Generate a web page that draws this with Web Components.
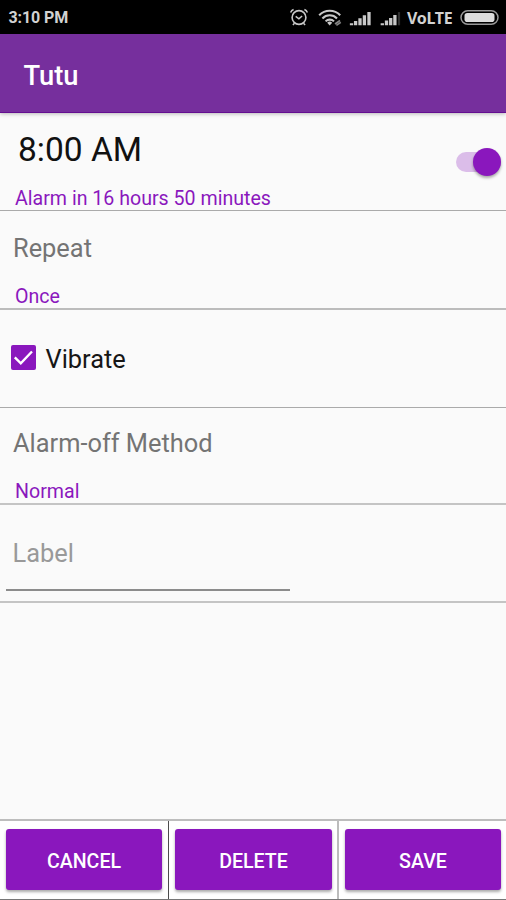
<!DOCTYPE html>
<html lang="en">
<head>
<meta charset="utf-8">
<title>Tutu</title>
<style>
body{margin:0;background:#fafafa;font-family:Roboto,"Liberation Sans",sans-serif;color:#111}
</style>
</head>
<body>
<alarm-screen></alarm-screen>
<script>
const define=(name,html)=>customElements.define(name,class extends HTMLElement{
  constructor(){
    super();
    const t=document.createElement('template');
    t.innerHTML=html;
    this.attachShadow({mode:'open'}).append(t.content.cloneNode(true));
  }
});

define('status-bar',`<style>
:host{display:flex;box-sizing:border-box;height:34px;background:#000;color:#d2d2d2;align-items:center;padding:2px 6px 0 8.5px;font-weight:700}
.time{font-size:16px;letter-spacing:-.1px;flex:1;line-height:20px}
.net{font:700 16px/20px "Noto Sans","Open Sans",sans-serif;letter-spacing:-.3px;margin:0 7px 0 6px;width:46px;white-space:nowrap}
svg{display:block;flex:none}
</style>
<span class="time">3:10 PM</span>
<svg width="114" height="24" viewBox="0 0 114 24" fill="none" stroke="#c8c8c8">
<circle cx="12" cy="11.5" r="6.9" stroke-width="1.6"/>
<path d="M8.7 10.3l3.2 2.5 3.2-2.8M3.6 6.5a5 5 0 0 1 3-3M17.4 3.5a5 5 0 0 1 3 3M7.5 17.3l-1.6 1.8M16.5 17.3l1.6 1.8" stroke-width="1.5"/>
<path d="M32.2 9.2a14.5 14.5 0 0 1 21 0M35.4 12.4a10.2 10.2 0 0 1 14.6 0M38.6 15.4a5.8 5.8 0 0 1 8.4 0" stroke-width="2.1"/>
<path d="M40.2 16.7l2.5 2.9 2.5-2.9a3.6 3.6 0 0 0-5 0z" fill="#c8c8c8" stroke="none"/>
<path d="M48 18l5-3.5M49.4 19.4l4.4-3" stroke="#858585" stroke-width="1.7"/>
<path d="M64.5 19.3v-2M68.6 19.3v-4.3M73 19.3v-7M77.4 19.3v-10M82 19.3v-13.2M95.3 19.3v-2M99.5 19.3v-4.7M103.7 19.3v-7.3M107.9 19.3v-10.3" stroke-width="3.3"/>
<path d="M112 19.3v-13.2" stroke="#303030" stroke-width="2.2"/>
</svg>
<span class="net">VoLTE</span>
<svg width="40" height="18" viewBox="0 0 40 18"><rect x="1" y="1.8" width="37" height="13.4" rx="6.7" fill="none" stroke="#989898" stroke-width="1.5"/><rect x="4.5" y="3.9" width="30" height="9.2" rx="2.8" fill="#ddd"/></svg>`);

define('app-bar',`<style>
:host{display:flex;box-sizing:border-box;height:79px;background:#762f9d;color:#fff;align-items:center;padding:5px 24px 0 23.5px;font-weight:500;font-size:27.3px;border-bottom:1px solid #640e91;box-shadow:0 1px 4px #0004;position:relative}
</style><slot></slot>`);

define('setting-row',`<style>
:host{display:flex;flex-direction:column;box-sizing:border-box;height:98px;border-bottom:1px solid #aaa;padding:22px 0 0 13px;color:#747474}
.main{display:flex;align-items:center;font-size:25.4px;line-height:30px;white-space:nowrap}
::slotted([slot=detail]){margin:auto 0 -1px 2px;font-size:19.6px;line-height:24px;color:#8a17bd}
</style><div class="main"><slot></slot></div><slot name="detail"></slot>`);

define('toggle-switch',`<style>
:host{display:flex;align-items:center;justify-content:flex-end;width:45px;height:20px;background:#dbbde9;border-radius:10px}
i{flex:none;width:28px;height:28px;border-radius:50%;background:#8a17bd;box-shadow:0 2px 3px #0005}
</style><i></i>`);

define('check-box',`<style>
:host{display:flex;align-items:flex-start;gap:10px;color:#161616}
svg{margin-top:1px}
</style><svg width="25" height="25" viewBox="0 0 25 25"><rect width="25" height="25" rx="2" fill="#8a17bd"/><path d="M3.8 12.3l6 6L21 6.5" fill="none" stroke="#fff" stroke-width="2.4"/></svg><span><slot></slot></span>`);

define('label-field',`<style>
:host{display:block;width:284px;height:64px;box-sizing:border-box;padding:11px 0 0 6.5px;border-bottom:2px solid #8c8c8c;color:#999;font-size:25.4px;line-height:30px}
</style><slot></slot>`);

define('action-button',`<style>
:host{display:flex;align-items:center;justify-content:center;box-sizing:border-box;height:61px;padding-top:3px;border-radius:3px;background:#8a17bd;color:#fff;font-weight:500;font-size:19.6px;box-shadow:0 2px 3px #0005}
</style><slot></slot>`);

define('alarm-screen',`<style>
:host{display:flex;flex-direction:column;width:506px;height:900px;overflow:hidden;background:#fafafa}
main{flex:1}
.time{padding:17px 4px 0 15px}
.clock{display:flex;align-items:center;width:486px;height:40px;color:#111;font-size:33.5px}
.clock span{flex:1;padding-left:3px}
toggle-switch{margin-top:23px}
.time [slot=detail]{margin-left:0;margin-bottom:-1px}
.repeat{height:99px;padding-top:22px;border-bottom:2px solid #bcbcbc}
.repeat [slot=detail]{margin-bottom:-1px}
.vibrate{padding:34px 0 0 10.5px}
.method{height:97px;padding-top:20px;border-bottom:2px solid #c4c4c4}
.label{padding:22px 0 0 6px;border-bottom:2px solid #c4c4c4}
footer{display:grid;grid-template-columns:169px 170px 167px;height:81px;box-sizing:border-box;border-top:2px solid #bdbdbd;border-bottom:1px solid #777;background:#fff}
footer div{padding:8px 6px;border-right:1.5px solid #4d4d4d}
footer div+div{border-right:2px solid #bcbcbc;padding-right:5px}
footer div:last-child{border:0;padding-right:5px}
</style>
<status-bar></status-bar>
<app-bar>Tutu</app-bar>
<main>
<setting-row class="time"><div class="clock"><span>8:00 AM</span><toggle-switch></toggle-switch></div><span slot="detail">Alarm in 16 hours 50 minutes</span></setting-row>
<setting-row class="repeat">Repeat<span slot="detail">Once</span></setting-row>
<setting-row class="vibrate"><check-box>Vibrate</check-box></setting-row>
<setting-row class="method">Alarm-off Method<span slot="detail">Normal</span></setting-row>
<setting-row class="label"><label-field>Label</label-field></setting-row>
</main>
<footer><div><action-button>CANCEL</action-button></div><div><action-button>DELETE</action-button></div><div><action-button>SAVE</action-button></div></footer>`);
</script>
</body>
</html>
